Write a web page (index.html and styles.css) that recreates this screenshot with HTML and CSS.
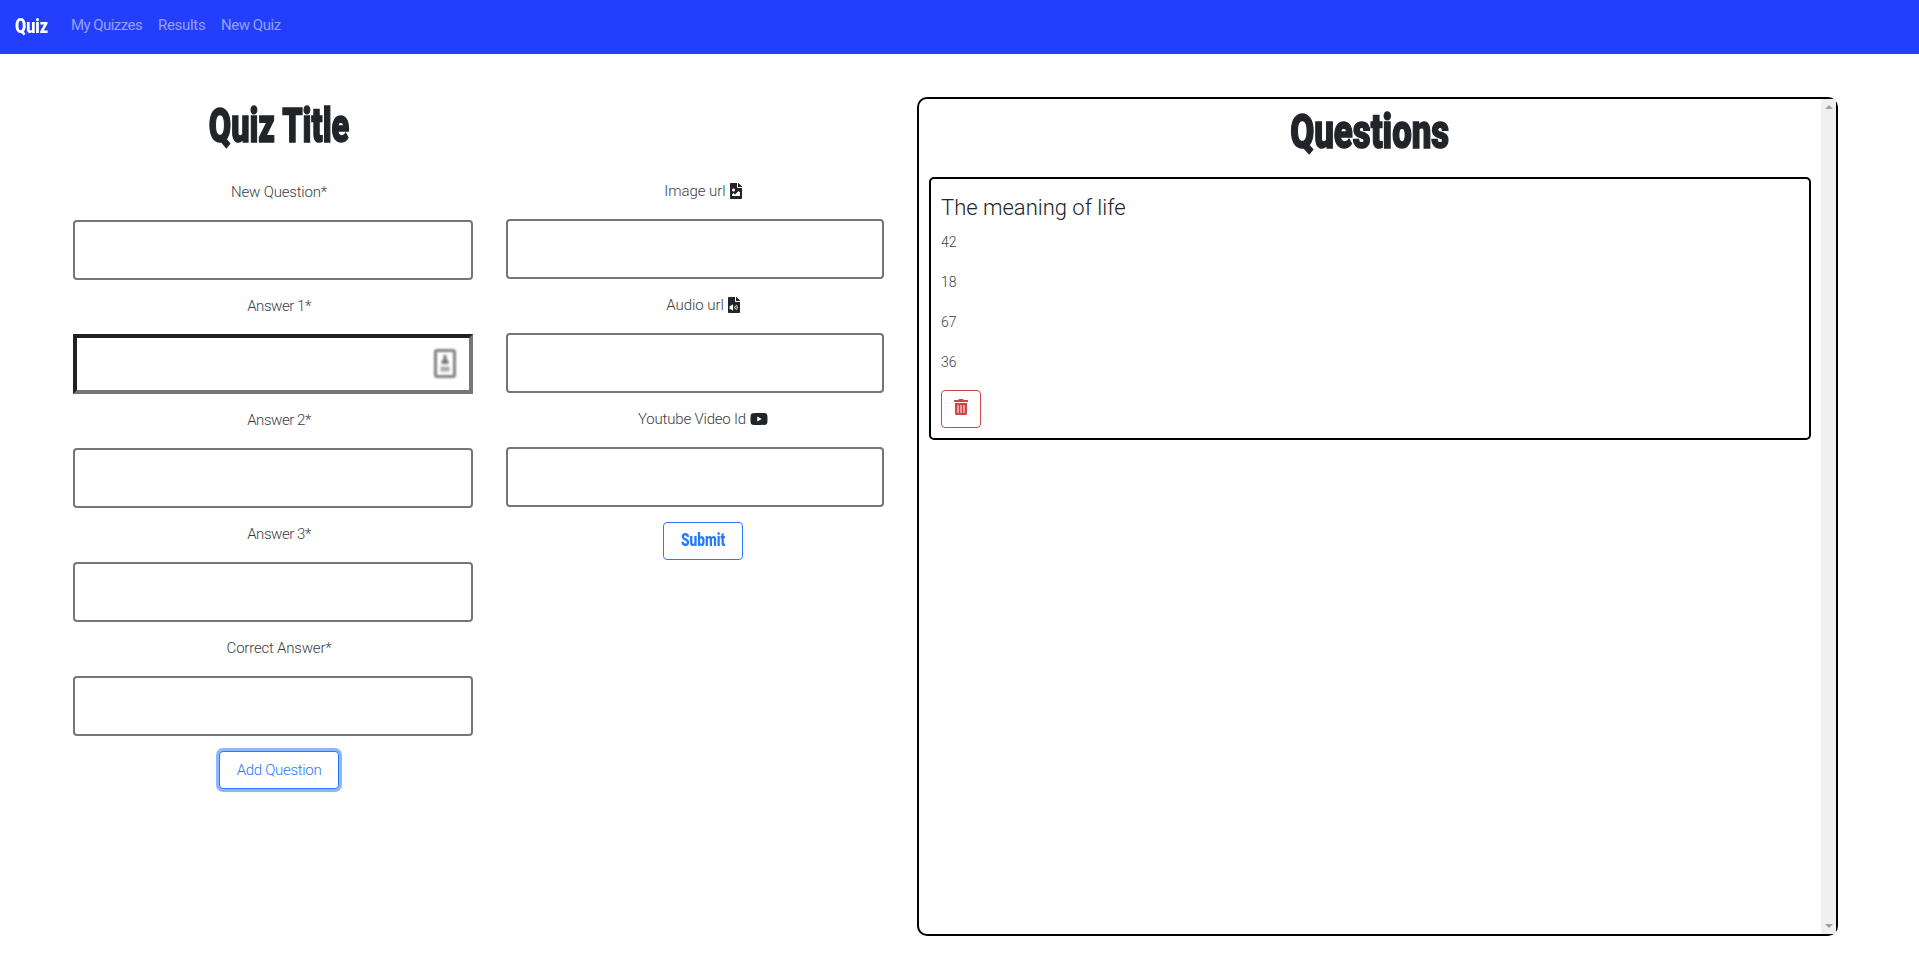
FILE: index.html
```html
<!DOCTYPE html>
<html lang="en">
<head>
<meta charset="utf-8">
<title>Quiz</title>
<link rel="stylesheet" href="styles.css">
</head>
<body>
<nav class="navbar">
  <a class="brand"><span class="display display-brand">Quiz</span></a>
  <a class="nav-link nav-quizzes">My Quizzes</a>
  <a class="nav-link nav-results">Results</a>
  <a class="nav-link nav-new">New Quiz</a>
</nav>
<main class="layout">
  <section class="column column-main">
    <h1 class="heading"><span class="display display-title">Quiz Title</span></h1>
    <div class="field"><label class="label">New Question*</label><div class="input"></div></div>
    <div class="field"><label class="label label-answer">Answer 1*</label>
      <div class="input input-inset">
        <svg class="autofill" viewBox="0 0 24 32">
          <rect x="2.5" y="2.5" width="19" height="26" rx="1.5" fill="none" stroke="#808080" stroke-width="3"/>
          <path d="M10.500 7h3v4l2 2v3h-7v-3l2-2z" fill="#777"/>
          <path d="M7.500 18.500h9v5h-9z" fill="#aaa"/>
        </svg>
      </div>
    </div>
    <div class="field"><label class="label label-answer">Answer 2*</label><div class="input"></div></div>
    <div class="field"><label class="label label-answer">Answer 3*</label><div class="input"></div></div>
    <div class="field"><label class="label">Correct Answer*</label><div class="input"></div></div>
    <button class="btn btn-add">Add Question</button>
  </section>
  <section class="column column-media">
    <div class="field"><label class="label label-media">Image url
      <svg class="icon-file" viewBox="0 0 384 512"><path d="M384 121.900V128H256V0h6.100c6.400 0 12.500 2.500 17 7l97.900 98c4.500 4.500 7 10.600 7 16.900zM248 160c-13.200 0-24-10.800-24-24V0H24C10.700 0 0 10.700 0 24v464c0 13.300 10.700 24 24 24h336c13.300 0 24-10.700 24-24V160H248zm-135.500 16c26.500 0 48 21.500 48 48s-21.500 48-48 48-48-21.500-48-48 21.500-48 48-48zm208 240h-256l.5-48.500L104.500 328c4.700-4.700 11.800-4.200 16.500.5L160.500 368 264 264.500c4.700-4.700 12.300-4.700 17 0l39.500 39.500v112z"/></svg></label><div class="input"></div></div>
    <div class="field"><label class="label label-media">Audio url
      <svg class="icon-file" viewBox="0 0 384 512"><path d="M248 160c-13.200 0-24-10.800-24-24V0H24C10.700 0 0 10.700 0 24v464c0 13.300 10.700 24 24 24h336c13.300 0 24-10.700 24-24V160H248zM384 121.900V128H256V0h6.100c6.400 0 12.500 2.500 17 7l97.900 98c4.500 4.500 7 10.600 7 16.900z"/><path class="cutout" d="M64 280h35l40-40c8-7 21-2 21 8v176c0 11-13 16-21 8l-40-40H64c-7 0-12-5-12-12v-88c0-7 5-12 12-12z"/><path class="wave" d="M195 305q28 31 0 62M232 278q52 58 0 116M270 250q76 86 0 172"/></svg></label><div class="input"></div></div>
    <div class="field"><label class="label">Youtube Video Id
      <svg class="icon-youtube" viewBox="0 0 576 512"><path d="M549.655 124.083c-6.281-23.650-24.787-42.276-48.284-48.597C458.781 64 288 64 288 64S117.220 64 74.629 75.486c-23.497 6.322-42.003 24.947-48.284 48.597C14.933 166.950 14.933 256.400 14.933 256.400s0 89.438 11.412 132.305c6.281 23.650 24.787 41.500 48.284 47.821C117.220 448 288 448 288 448s170.780 0 213.371-11.486c23.497-6.321 42.003-24.171 48.284-47.821 11.412-42.867 11.412-132.305 11.412-132.305s0-89.438-11.412-132.305zM232.145 337.591V175.185l142.739 81.205z"/></svg></label><div class="input"></div></div>
    <button class="btn btn-submit"><span class="display display-submit">Submit</span></button>
  </section>
  <section class="questions">
    <div class="questions-body">
      <h1 class="questions-heading"><span class="display display-questions">Questions</span></h1>
      <article class="card">
        <h2 class="card-title">The meaning of life</h2>
        <p class="answer">42</p>
        <p class="answer">18</p>
        <p class="answer">67</p>
        <p class="answer">36</p>
        <button class="btn btn-delete" aria-label="Delete"><svg class="icon-trash" viewBox="0 0 448 512"><path d="M32 464a48 48 0 0 0 48 48h288a48 48 0 0 0 48-48V128H32zm272-256a16 16 0 0 1 32 0v224a16 16 0 0 1-32 0zm-96 0a16 16 0 0 1 32 0v224a16 16 0 0 1-32 0zm-96 0a16 16 0 0 1 32 0v224a16 16 0 0 1-32 0zM432 32H312l-9.400-18.700A24 24 0 0 0 281.100 0H166.800a23.720 23.720 0 0 0-21.400 13.300L136 32H16A16 16 0 0 0 0 48v32a16 16 0 0 0 16 16h416a16 16 0 0 0 16-16V48a16 16 0 0 0-16-16z"/></svg></button>
      </article>
    </div>
    <div class="scrollbar"><span class="arrow arrow-up"></span><span class="arrow arrow-down"></span></div>
  </section>
</main>
</body>
</html>
```

FILE: styles.css
```css
* { box-sizing: border-box; }
body { margin: 0; background: #fff; color: #212529; font: 300 15px/24px Roboto, sans-serif; overflow: hidden; }
h1, h2, p { margin: 0; }

.navbar { display: flex; height: 54px; background: #243ffb; padding: 12px 0 0 15px; }
.nav-link { color: rgba(255, 255, 255, .5); font-weight: 400; height: 24px; line-height: 27px; white-space: nowrap; }
.brand { width: 56px; color: #fff; height: 28px; line-height: 28px; }
.nav-quizzes { width: 87px; letter-spacing: -.55px; }
.nav-results { width: 63px; letter-spacing: -.3px; }
.nav-new { width: 70px; letter-spacing: -.45px; }

.display { display: inline-block; font-weight: 900; white-space: nowrap; }
.display-brand { font-size: 20px; transform: scaleX(.81); transform-origin: left; }
.display-title { font-size: 48px; transform: scaleX(.675); -webkit-text-stroke: 1.5px; }
.display-questions { font-size: 48px; transform: scaleX(.725); -webkit-text-stroke: 1.5px; }
.display-submit { font-size: 18px; transform: scaleX(.76); }

.layout { display: flex; padding: 43px 0 0 73px; }
.column { display: flex; flex-direction: column; align-items: center; }
.column-main { width: 412px; }
.column-media { width: 394px; margin-left: 21px; padding-top: 82px; }
.heading { height: 83px; line-height: 58px; width: 100%; display: flex; justify-content: center; }
.field { width: 100%; height: 114px; }
.label { display: flex; justify-content: center; align-items: center; gap: 4px; height: 24px; margin-bottom: 16px; white-space: nowrap; color: #3a3e42; letter-spacing: -.2px; }
.label-answer { letter-spacing: -.45px; }
.label-media { letter-spacing: -.05px; }
.input { width: 400px; height: 60px; border: 2px solid #767676; border-radius: 4px; }
.column-media .input { width: 378px; }
.input-inset { border: 4px solid; border-color: #212121 #767676 #767676 #212121; border-radius: 0; display: flex; align-items: center; justify-content: flex-end; padding-right: 12px; }
.autofill { width: 24px; height: 32px; filter: blur(.9px); }
.icon-file { width: 12px; height: 16px; fill: #212529; }
.icon-youtube { width: 18px; height: 16px; fill: #212529; }
.icon-file .cutout { fill: #fff; }
.icon-file .wave { fill: none; stroke: #fff; stroke-width: 24; }

.btn { font: 300 15px/24px Roboto, sans-serif; height: 38px; padding: 0; border-radius: 4px; background: #fff; border: 1px solid #2979ff; color: #2979ff; display: flex; align-items: center; justify-content: center; }
.btn-add { width: 120px; margin-top: 1px; padding-bottom: 1px; box-shadow: 0 0 0 3px #8bb8ff; white-space: nowrap; letter-spacing: -.3px; }
.btn-submit { width: 80px; margin: 1px 0 0; padding-bottom: 2px; }

.questions { width: 921px; height: 839px; margin-left: 17px; border: 2px solid #000; border-radius: 10px; display: flex; }
.questions-body { width: 902px; padding: 0 10px; }
.questions-heading { height: 78px; line-height: 66px; display: flex; justify-content: center; }
.card { height: 263px; border: 2px solid #000; border-radius: 5px; padding: 14px 10px; }
.card-title { font-size: 22px; font-weight: 300; line-height: 29px; height: 37px; }
.answer { height: 40px; line-height: 24px; font-size: 14px; color: #3a3e42; }
.btn-delete { width: 40px; border-color: #d34545; }
.icon-trash { width: 14px; height: 16px; fill: #d34545; position: relative; top: -2px; }
.scrollbar { width: 15px; background: #f0f0f0; display: flex; flex-direction: column; justify-content: space-between; align-items: center; padding: 6px 0 6px; }
.arrow { border: 4px solid transparent; width: 0; }
.arrow-up { border-top: 0; border-bottom-color: #a0a0a0; }
.arrow-down { border-bottom: 0; border-top-color: #a0a0a0; }
```
